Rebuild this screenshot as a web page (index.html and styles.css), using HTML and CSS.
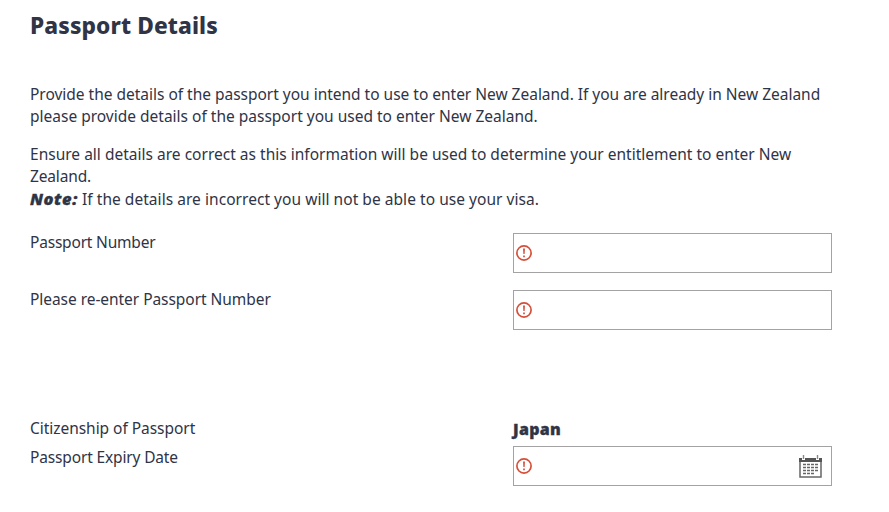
FILE: index.html
```html
<!DOCTYPE html>
<html lang="en">
<head>
<meta charset="utf-8">
<title>Passport Details</title>
<link rel="stylesheet" href="styles.css">
</head>
<body>
<svg class="defs" aria-hidden="true">
  <symbol id="alert" viewBox="0 0 16 16"><circle cx="8" cy="8" r="7.100" fill="none" stroke="#d5503a" stroke-width="1.700"/><path d="M7.100 3.500h1.800l-.3 5.600H7.400zM7.200 10.500h1.600v1.800H7.200z" fill="#d2432d"/></symbol>
</svg>
<main class="page">
  <h1 class="title">Passport Details</h1>
  <p class="intro"><span class="line-a">Provide the details of the passport you intend to use to enter New Zealand. If you are already in New Zealand</span><br><span class="line-b">please provide details of the passport you used to enter New Zealand.</span></p>
  <p class="intro"><span class="line-c">Ensure all details are correct as this information will be used to determine your entitlement to enter New</span><br><span class="line-d">Zealand.</span></p>
  <p class="note"><strong>Note:</strong><span class="line-e">If the details are incorrect you will not be able to use your visa.</span></p>
  <form class="form">
    <div class="row"><label class="num">Passport Number</label><div class="field"><svg class="alert"><use href="#alert"/></svg></div></div>
    <div class="row"><label class="renum">Please re-enter Passport Number</label><div class="field"><svg class="alert"><use href="#alert"/></svg></div></div>
    <div class="row citizenship"><label class="cit">Citizenship of Passport</label><strong class="country">Japan</strong></div>
    <div class="row expiry"><label class="exp">Passport Expiry Date</label><div class="field"><svg class="alert"><use href="#alert"/></svg>
      <svg class="calendar" viewBox="0 0 23 23"><path d="M1 4v18h21V4" fill="none" stroke="#666" stroke-width="1.500"/><path d="M0 3h3v2h3V3h11v2h3V3h3v4H0z" fill="#555"/><path d="M4.500 0v4M18.500 0v4" stroke="#888" stroke-width="1.400"/><path d="M4 9.500h15M4 12.500h15M4 15.500h15M4 18.500h11" stroke="#666" stroke-width="1.300" stroke-dasharray="3 1"/></svg></div></div>
  </form>
</main>
</body>
</html>
```
FILE: styles.css
```css
body { margin: 0; background: #fff; color: #2f3446; font: 15.5px/22px "Noto Sans", sans-serif; }
.defs { position: absolute; width: 0; height: 0; }
.page { padding: 11px 57px 0 30px; white-space: nowrap; }
.title { margin: 0 0 42px; font-size: 22.7px; line-height: 30px; font-weight: 800; letter-spacing: .1px; }
.intro { margin: 0; }
.intro + .intro { margin-top: 16px; }
.line-a { letter-spacing: -.015px; }
.line-c { letter-spacing: .012px; }
.line-d { letter-spacing: -.15px; }
.line-e { letter-spacing: .044px; }
.note { margin: 1px 0 23px; display: flex; }
.note strong { width: 52px; font-size: 16.5px; font-style: italic; font-weight: 900; letter-spacing: .5px; -webkit-text-stroke: .3px; }
.form { display: grid; gap: 17px; }
.row { display: grid; grid-template-columns: 483px 319px; align-items: start; }
.row label { margin-top: -2px; }
.num { letter-spacing: -.2px; }
.renum { letter-spacing: -.05px; }
.cit { letter-spacing: -.04px; }
.exp { letter-spacing: -.15px; }
.field { box-sizing: border-box; height: 40px; border: 1px solid #a3a3a3; display: flex; align-items: center; justify-content: space-between; padding: 0 9px 0 2px; }
.alert { width: 16px; height: 16px; }
.calendar { width: 23px; height: 23px; }
.citizenship { margin-top: 72px; height: 26px; }
.country { margin-top: -1px; font-size: 16px; font-weight: 900; letter-spacing: .3px; -webkit-text-stroke: .3px; }
.expiry { margin-top: -16px; }
.row .exp { margin-top: 0; }
```
